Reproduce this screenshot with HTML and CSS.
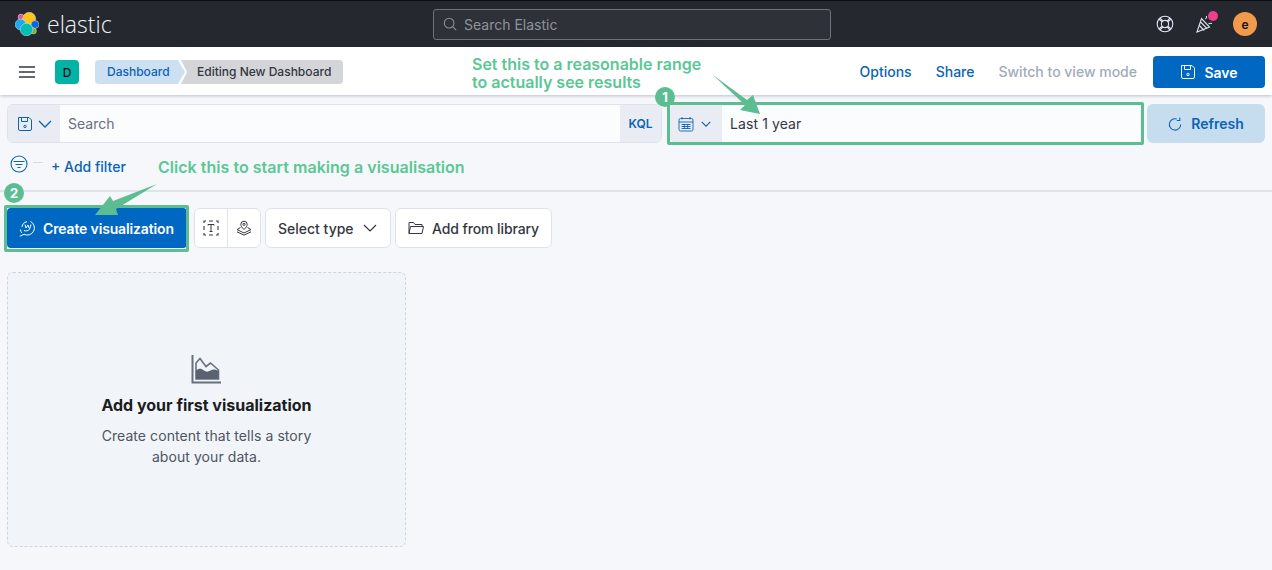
FILE: index.html
```html
<!DOCTYPE html>
<html lang="en">

<head>
    <meta charset="UTF-8">
    <meta name="viewport" content="width=device-width, initial-scale=1.0">
    <title>Elastic - Editing New Dashboard</title>
    <link rel="stylesheet" href="styles.css">
</head>

<body>
    <header class="topbar">
        <div class="brand">
            <svg class="logo" width="24" height="24" viewBox="0 0 24 24" stroke="#dfe3e8" stroke-width=".5">
                <circle cx="6" cy="5" r="2.900" fill="#ee5097"/>
                <circle cx="14.200" cy="6.800" r="6.500" fill="#fec514"/>
                <circle cx="20" cy="12.500" r="3.900" fill="#0b64dd"/>
                <circle cx="5.600" cy="12.500" r="5.400" fill="#1ba9f5"/>
                <circle cx="18.500" cy="19" r="2.900" fill="#7ab32a"/>
                <circle cx="11.500" cy="17.500" r="6.300" fill="#00bfb3"/>
            </svg>
            <span class="brand-name">elastic</span>
        </div>
        <div class="global-search">
            <svg class="icon" width="14" height="14" viewBox="0 0 16 16" fill="none" stroke="#8d939c" stroke-width="1.2">
                <circle cx="7" cy="7" r="5.5"/>
                <path d="M11 11l4 4"/>
            </svg>
            <span>Search Elastic</span>
        </div>
        <div class="top-actions">
            <svg width="18" height="18" viewBox="0 0 18 18" fill="none" stroke="#dfe5ef" stroke-width="1.100">
                <circle cx="9" cy="9" r="7.800"/>
                <circle cx="9" cy="9" r="3.600"/>
                <path d="M4 2.800l2.800 3.400M2.800 4l3.400 2.800M14 2.800l-2.800 3.400M15.200 4l-3.400 2.800M4 15.200l2.800-3.400M2.800 14l3.400-2.800M14 15.200l-2.800-3.400M15.200 14l-3.400-2.800"/>
            </svg>
            <span class="news">
                <svg width="18" height="18" viewBox="0 0 18 18" fill="none" stroke="#dfe5ef" stroke-width="1.100">
                    <path d="M1 17L5.500 3.500l8 8.500z"/>
                    <path d="M3.400 10.500l4.800 5M4.600 7l6.400 6.700"/>
                    <path d="M9.500 4c1-.8 1.300-1.800 1-3M12.500 9c1-.8 2.300-1 3.500-.5"/>
                </svg>
                <i class="news-dot"></i>
            </span>
            <span class="avatar">e</span>
        </div>
    </header>

    <nav class="subbar">
        <svg class="burger" width="16" height="12" viewBox="0 0 16 12" fill="none" stroke="#343741" stroke-width="1.6">
            <path d="M0 1h16M0 6h16M0 11h16"/>
        </svg>
        <span class="space-badge">D</span>
        <div class="crumbs">
            <a class="crumb crumb-link">Dashboard</a>
            <span class="crumb crumb-current">Editing New Dashboard</span>
        </div>
        <div class="subbar-links">
            <a class="link">Options</a>
            <a class="link">Share</a>
            <a class="link link-off">Switch to view mode</a>
            <button class="btn-primary btn-save">
                <svg width="16" height="16" viewBox="0 0 16 16" fill="none" stroke="#fff" stroke-width="1">
                    <path d="M1.500 1.500h10.500l2.500 2.500v9a1.500 1.500 0 0 1-1.500 1.500h-10a1.500 1.500 0 0 1-1.500-1.500z"/>
                    <path d="M4.500 1.500v4h6v-4"/>
                    <circle cx="8" cy="10.500" r="1.200"/>
                </svg>
                Save
            </button>
        </div>
    </nav>

    <section class="querybar">
        <div class="search-group">
            <span class="prepend">
                <svg width="16" height="16" viewBox="0 0 16 16" fill="none" stroke="#0b64b4" stroke-width="1">
                    <path d="M1.500 1.500h10.500l2.500 2.500v9a1.500 1.500 0 0 1-1.500 1.500h-10a1.500 1.500 0 0 1-1.500-1.500z"/>
                    <path d="M4.500 1.500v4h6v-4"/>
                    <circle cx="8" cy="10.500" r="1.200"/>
                </svg>
                <svg width="14" height="14" viewBox="0 0 14 14" fill="none" stroke="#0b64b4" stroke-width="1.3">
                    <path d="M1 4l6 6 6-6"/>
                </svg>
            </span>
            <span class="search-text">Search</span>
            <span class="kql">KQL</span>
        </div>
        <div class="date-group">
            <span class="prepend prepend-date">
                <svg width="16" height="16" viewBox="0 0 16 16" fill="none" stroke="#0b64b4" stroke-width=".9">
                    <rect x="1" y="2.500" width="14" height="12.500" rx="1.500"/>
                    <path d="M1 6h14M4 1v2.500M12 1v2.500M3.500 8.500h9M3.500 10.500h9M3.500 12.500h9M6.300 8v5M9.700 8v5"/>
                </svg>
                <svg width="10" height="10" viewBox="0 0 14 14" fill="none" stroke="#0b64b4" stroke-width="1.6">
                    <path d="M1 4l6 6 6-6"/>
                </svg>
            </span>
            <span class="date-text">Last 1 year</span>
        </div>
        <button class="btn-refresh">
            <svg width="14" height="14" viewBox="0 0 16 16" fill="none" stroke="#0b64b4" stroke-width="1.2">
                <path d="M10 2.300A6.500 6.500 0 1 0 14.500 8.500"/>
                <path d="M13.500 .5v3.500h-3.500"/>
            </svg>
            Refresh
        </button>
    </section>

    <section class="filterbar">
        <svg width="18" height="18" viewBox="0 0 18 18" fill="none" stroke="#0b64b4" stroke-width="1.1">
            <circle cx="9" cy="9" r="8"/>
            <path d="M3.500 6.500h11M5.500 9.500h7M7.500 12.500h3"/>
        </svg>
        <i class="filter-dash"></i>
        <a class="add-filter">+ Add filter</a>
    </section>

    <section class="toolbar">
        <button class="btn-primary btn-create">
            <svg width="17" height="17" viewBox="0 0 17 17" fill="none" stroke="#fff" stroke-width="1">
                <path d="M11.500 1.500A6.800 6.800 0 1 1 5 14.300L.8 16.300"/>
                <path d="M3 7a6 6 0 0 1 5-5.300M1.500 9.500c0 1.500.5 2.500 1.300 3.500"/>
                <path d="M5 10.500c1.500.8 4 .5 5.500-1.200L12 4.500M6 4.500l1 3.500 2-3 1 3"/>
            </svg>
            Create visualization
        </button>
        <div class="icon-group">
            <span class="icon-btn">
                <svg width="16" height="16" viewBox="0 0 16 16" fill="none" stroke="#343741" stroke-width="1">
                    <path d="M1 3V1h2M6 1h4M13 1h2v2M15 6v4M15 13v2h-2M10 15H6M3 15H1v-2M1 10V6" stroke-width="1.100"/>
                    <path d="M5 5.500V4.500h6v1M8 4.500v7M6.500 11.500h3"/>
                </svg>
            </span>
            <span class="icon-btn">
                <svg width="16" height="16" viewBox="0 0 16 16" fill="none" stroke="#343741" stroke-width="1">
                    <path d="M8 9.500C6 7.500 4.800 6 4.800 4.400a3.200 3.200 0 0 1 6.400 0C11.200 6 10 7.500 8 9.500z"/>
                    <circle cx="8" cy="4.400" r="1.100"/>
                    <path d="M4.500 7.500L1 9.600l7 3.400 7-3.400-3.500-2.100M1 11.800l7 3.400 7-3.400"/>
                </svg>
            </span>
        </div>
        <button class="btn-plain btn-type">
            Select type
            <svg width="14" height="14" viewBox="0 0 14 14" fill="none" stroke="#343741" stroke-width="1.2">
                <path d="M1 4l6 6 6-6"/>
            </svg>
        </button>
        <button class="btn-plain btn-library">
            <svg width="16" height="14" viewBox="0 0 16 14" fill="none" stroke="#343741" stroke-width="1">
                <path d="M1 12.500V1.500h4.500l1.500 2h7v2"/>
                <path d="M1 12.500l1.500-7h13l-1.500 7z"/>
            </svg>
            Add from library
        </button>
    </section>

    <section class="empty-panel">
        <svg class="empty-icon" width="32" height="32" viewBox="0 0 32 32">
            <path d="M2.500 2v27.500H31" fill="none" stroke="#69707d" stroke-width="2"/>
            <path d="M6 26V10l4-4.500 6 8 4.500-3.500 8 7V26z" fill="none" stroke="#69707d" stroke-width="1.600"/>
            <path d="M6 26v-8.500c3-2.500 5-2.500 8 0 2 1.500 4 1.500 6.500 0 3-1.500 5-1 8 .5V26z" fill="#5a6270"/>
        </svg>
        <h2>Add your first visualization</h2>
        <p>Create content that tells a story about your data.</p>
    </section>

    <!-- annotations drawn on top of the screenshot -->
    <div class="note note-range">Set this to a reasonable range<br>to actually see results</div>
    <div class="note note-create">Click this to start making a visualisation</div>
    <div class="mark mark-date"></div>
    <div class="mark mark-create"></div>
    <span class="num num-1">1</span>
    <span class="num num-2">2</span>
    <svg class="arrows" width="1272" height="570" viewBox="0 0 1272 570">
        <path d="M713 75L747 100L753 95L760 114L740 110L745 105Z" fill="#5bbd91"/>
        <path d="M157 184L113 201L110 196L95 215L118 215L116 209Z" fill="#5bbd91"/>
    </svg>
</body>

</html>
```

FILE: styles.css
```css
* {
    box-sizing: border-box;
}

body {
    margin: 0;
    height: 570px;
    overflow: hidden;
    position: relative;
    background: #f5f7fb;
    font-family: 'Inter', 'Liberation Sans', sans-serif;
    font-size: 14px;
    color: #343741;
}

svg {
    display: block;
    flex: none;
}

button {
    font-family: inherit;
    border: none;
    cursor: pointer;
}

/* dark header */
.topbar {
    height: 47px;
    background: #25282f;
    border-top: 1px solid #0d0e10;
    display: flex;
    align-items: center;
    padding: 0 15px;
    position: relative;
}

.brand {
    display: flex;
    align-items: center;
    gap: 8px;
    width: 418px;
}

.brand-name {
    font-family: 'Open Sans', sans-serif;
    font-size: 23px;
    font-weight: 300;
    color: #f0f2f5;
    line-height: 1;
}

.global-search {
    width: 398px;
    height: 31px;
    border: 1px solid #6d7179;
    border-radius: 3px;
    background: #2e3138;
    display: flex;
    align-items: center;
    gap: 7px;
    padding: 0 9px;
    color: #8d939c;
}

.top-actions {
    margin-left: auto;
    display: flex;
    align-items: center;
    gap: 22px;
}

.top-actions .avatar {
    margin-left: -3px;
}

.news {
    position: relative;
}

.news-dot {
    position: absolute;
    top: -4px;
    right: -4px;
    width: 10px;
    height: 10px;
    border-radius: 50%;
    background: #ee3f8c;
}

.avatar {
    width: 24px;
    height: 24px;
    border-radius: 50%;
    background: #f19a4b;
    color: #111;
    font-size: 12px;
    font-weight: 600;
    display: flex;
    align-items: center;
    justify-content: center;
}

/* breadcrumb row */
.subbar {
    height: 48px;
    background: #fff;
    box-shadow: 0 1px 3px rgba(60, 70, 100, 0.3);
    display: flex;
    align-items: center;
    padding: 2px 7px 0 19px;
    position: relative;
}

.burger {
    margin-right: 20px;
}

.space-badge {
    width: 24px;
    height: 24px;
    border-radius: 4px;
    background: #00b3a4;
    color: #111;
    font-size: 12px;
    font-weight: 500;
    display: flex;
    align-items: center;
    justify-content: center;
    margin-right: 16px;
}

.crumbs {
    display: flex;
    height: 24px;
    font-size: 12px;
    font-weight: 500;
}

.crumb {
    display: flex;
    align-items: center;
    padding-bottom: 2px;
}

.crumb-link {
    width: 90px;
    padding-left: 12px;
    background: #cce0f2;
    color: #0b64b4;
    border-radius: 4px 0 0 4px;
    clip-path: polygon(0 0, 92% 0, 100% 50%, 92% 100%, 0 100%);
}

.crumb-current {
    width: 162px;
    margin-left: -4px;
    padding-left: 16px;
    background: #d3d5d9;
    border-radius: 0 4px 4px 0;
    clip-path: polygon(0 0, 100% 0, 100% 100%, 0 100%, 6px 50%);
}

.subbar-links {
    margin-left: auto;
    display: flex;
    align-items: center;
    gap: 24px;
    font-weight: 500;
}

.link {
    color: #0b64b4;
    padding-bottom: 2px;
}

.link-off {
    color: #a2abba;
    margin-right: -8px;
}

.btn-primary {
    background: #0067c2;
    color: #fff;
    border-radius: 4px;
    font-size: 14px;
    font-weight: 600;
    display: flex;
    align-items: center;
}

.btn-save {
    width: 112px;
    height: 32px;
    justify-content: center;
    gap: 8px;
}

/* query row */
.querybar {
    display: flex;
    padding: 9px 7px 0;
    height: 48px;
}

.search-group {
    width: 655px;
    height: 39px;
    background: #fbfcfd;
    border: 1px solid #dde2ec;
    border-radius: 6px;
    display: flex;
    align-items: center;
    overflow: hidden;
}

.prepend {
    height: 100%;
    width: 52px;
    background: #e9edf3;
    display: flex;
    align-items: center;
    justify-content: center;
    gap: 5px;
}

.search-text {
    margin-left: 8px;
    color: #69707d;
}

.kql {
    margin-left: auto;
    width: 41px;
    height: 100%;
    background: #e9edf3;
    color: #0b64b4;
    font-size: 12px;
    font-weight: 600;
    display: flex;
    align-items: center;
    justify-content: center;
}

.date-group {
    width: 470px;
    height: 39px;
    margin-left: 8px;
    background: #fbfcfd;
    border-radius: 6px;
    display: flex;
    align-items: center;
    overflow: hidden;
}

.prepend-date {
    width: 52px;
    gap: 7px;
    padding-right: 3px;
}

.date-text {
    margin-left: 8px;
    color: #343741;
    letter-spacing: 0.1px;
}

.btn-refresh {
    width: 118px;
    height: 39px;
    margin-left: 7px;
    background: #c6dcef;
    color: #0b64b4;
    border-radius: 6px;
    font-size: 14px;
    font-weight: 600;
    display: flex;
    align-items: center;
    justify-content: center;
    gap: 9px;
}

/* filter row */
.filterbar {
    height: 49px;
    border-bottom: 2px solid #dfe3ea;
    display: flex;
    align-items: flex-start;
    padding: 12px 0 0 10px;
}

.filter-dash {
    width: 10px;
    height: 1px;
    margin: 7px 0 0 5px;
    background: #d3dae6;
}

.add-filter {
    margin: 3px 0 0 8px;
    color: #0b64b4;
    font-weight: 500;
    line-height: 17px;
}

/* panel toolbar */
.toolbar {
    display: flex;
    align-items: center;
    gap: 4px;
    height: 40px;
    margin-top: 16px;
    padding-left: 7px;
}

.btn-create {
    width: 180px;
    height: 40px;
    padding-left: 12px;
    gap: 7px;
    margin-right: 3px;
    letter-spacing: -0.15px;
}

.icon-group {
    display: flex;
    height: 40px;
    width: 67px;
    background: #fff;
    border: 1px solid #dde2ec;
    border-radius: 6px;
}

.icon-btn {
    flex: 1;
    display: flex;
    align-items: center;
    justify-content: center;
}

.icon-btn + .icon-btn {
    border-left: 1px solid #dde2ec;
}

.btn-plain {
    height: 40px;
    background: #fff;
    border: 1px solid #dde2ec;
    border-radius: 6px;
    color: #343741;
    font-size: 14px;
    font-weight: 500;
    display: flex;
    align-items: center;
}

.btn-type {
    width: 126px;
    padding-left: 12px;
    gap: 9px;
}

.btn-library {
    width: 157px;
    padding-left: 12px;
    gap: 8px;
    letter-spacing: -0.1px;
}

/* empty dashboard panel */
.empty-panel {
    width: 399px;
    height: 275px;
    margin: 24px 0 0 7px;
    background: #f1f4f9;
    border: 1px dashed #cfd5df;
    border-radius: 6px;
    display: flex;
    flex-direction: column;
    align-items: center;
    padding-top: 80px;
}

.empty-icon {
    margin: 0 2px 8px 0;
}

.empty-panel h2 {
    margin: 0;
    font-size: 16px;
    line-height: 24px;
    font-weight: 700;
    color: #1a1c21;
}

.empty-panel p {
    margin: 8px 0 0;
    width: 240px;
    text-align: center;
    line-height: 21px;
    color: #4f5560;
    letter-spacing: 0.07px;
}

/* green annotations */
.note {
    position: absolute;
    color: #5bc795;
    font-size: 16px;
    font-weight: 600;
    line-height: 18px;
}

.note-range {
    left: 472px;
    top: 55px;
}

.note-create {
    left: 158px;
    top: 158px;
    letter-spacing: 0.03px;
}

.mark {
    position: absolute;
    border: 3px solid #5bbd91;
}

.mark-date {
    left: 667px;
    top: 102px;
    width: 477px;
    height: 43px;
    border-radius: 2px;
}

.mark-create {
    left: 4px;
    top: 205px;
    width: 185px;
    height: 47px;
    border-radius: 2px;
}

.num {
    position: absolute;
    width: 20px;
    height: 20px;
    border-radius: 50%;
    background: #5bbd91;
    color: #fff;
    font-size: 13px;
    font-weight: 700;
    display: flex;
    align-items: center;
    justify-content: center;
}

.num-1 {
    left: 655px;
    top: 87px;
}

.num-2 {
    left: 4px;
    top: 183px;
}

.arrows {
    position: absolute;
    left: 0;
    top: 0;
    pointer-events: none;
}
```
